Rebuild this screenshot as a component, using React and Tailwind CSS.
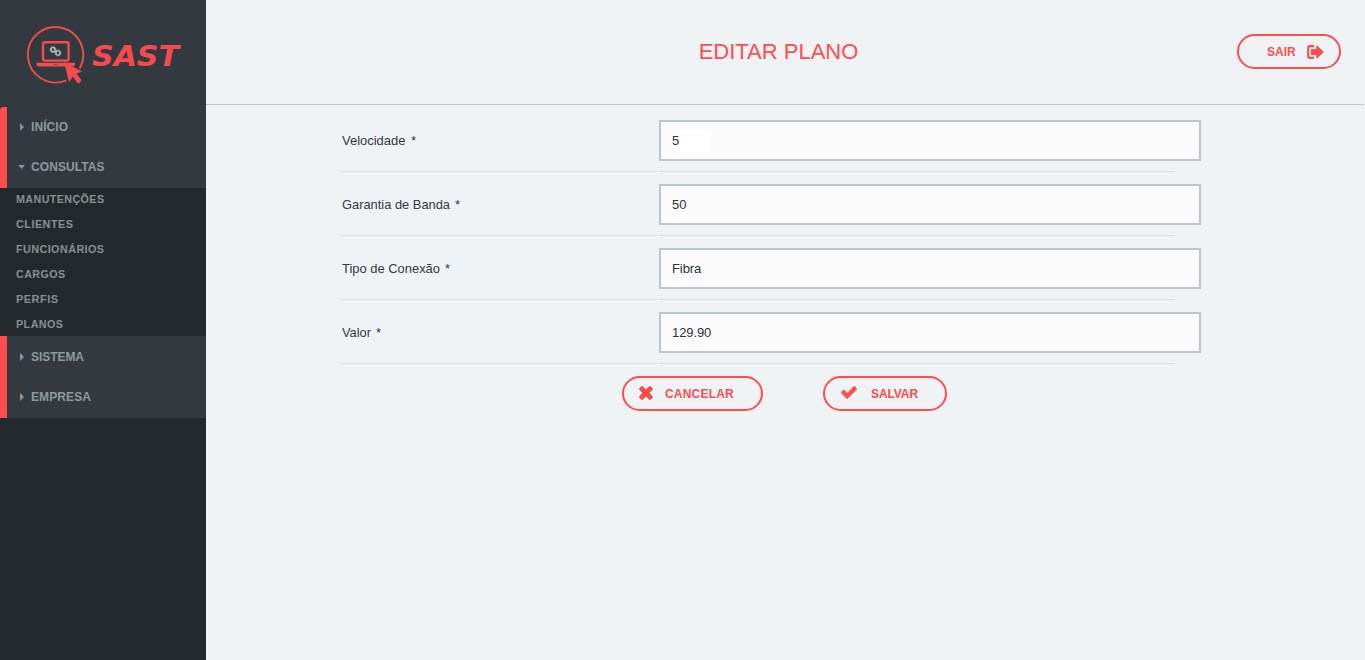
import React from "react";

function Logo() {
  return (
    <svg width="206" height="107" viewBox="0 0 206 107" className="block shrink-0" aria-label="SAST">
      <g fill="none" stroke="#f04d52">
        <path d="M66.3 80.3 A27.7 27.7 0 1 1 79.6 68.5" strokeWidth="1.9" />
        <rect x="43" y="42.2" width="25.6" height="18.4" rx="2" strokeWidth="2.4" />
      </g>
      <path d="M36.5 62.8H75v1.4q-.4 2.2-2.5 2.2H39q-2.3 0-2.5-2.2z" fill="#f04d52" />
      <path d="M53.5 64.4h4" stroke="#9b4146" strokeWidth="1" />
      <g fill="none" stroke="#b9c0c4">
        <circle cx="53" cy="49.6" r="2.1" strokeWidth="1.4" />
        <circle cx="53" cy="49.6" r="3" strokeWidth="0.9" strokeDasharray="1.2 1.15" />
        <circle cx="58" cy="53" r="2.1" strokeWidth="1.4" />
        <circle cx="58" cy="53" r="3" strokeWidth="0.9" strokeDasharray="1.2 1.15" />
      </g>
      <path d="M64 62 L82 71.4 L76.6 73.4 L81 79.4 Q81.2 82.8 78 83.4 L72.8 76.6 L69 82 Z" fill="#f54b50" />
      <text
        x="92"
        y="65.8"
        textLength="87"
        lengthAdjust="spacingAndGlyphs"
        fill="#f54b50"
        fontSize="28.5"
        fontWeight="bold"
        fontStyle="italic"
        fontFamily="'DejaVu Sans', sans-serif"
      >
        SAST
      </text>
    </svg>
  );
}

function Caret({ open }) {
  return (
    <span className="flex w-[7px] shrink-0 justify-center">
      {open ? (
        <svg width="7" height="4" viewBox="0 0 7 4"><path d="M0 0h7L3.5 4z" fill="#938f93" /></svg>
      ) : (
        <svg width="4" height="8" viewBox="0 0 4 8"><path d="M0 0v8l4-4z" fill="#938f93" /></svg>
      )}
    </span>
  );
}

function MenuItem({ open, width, children }) {
  return (
    <li className="flex h-10 items-center pl-[11px]">
      <Caret open={open} />
      <svg width="120" height="16" className="ml-[6px] block">
        <text x="0" y="12" textLength={width} fill="#8c9a9b" className="text-[12px] font-bold">{children}</text>
      </svg>
    </li>
  );
}

const links = [
  ["MANUTENÇÕES", 88.5],
  ["CLIENTES", 57.5],
  ["FUNCIONÁRIOS", 88.5],
  ["CARGOS", 49.5],
  ["PERFIS", 42.5],
  ["PLANOS", 47.5],
];

function Sidebar() {
  return (
    <aside className="flex w-[206px] shrink-0 flex-col bg-[#22292c]">
      <div className="bg-[#323a3f]"><Logo /></div>
      <ul className="h-[81px] rounded-tl-[3px] border-l-[7px] border-[#ff4d4d] bg-[#323a3f]">
        <MenuItem width={37}>INÍCIO</MenuItem>
        <MenuItem open width={73.5}>CONSULTAS</MenuItem>
      </ul>
      <ul className="h-[148px] pl-[15.5px]">
        {links.map(([name, width]) => (
          <li key={name} className="flex h-[25px] items-center">
            <svg width="160" height="16" className="block">
              <text x="0" y="10" textLength={width} lengthAdjust="spacingAndGlyphs" fill="#8b8f90" className="text-[10px] font-bold tracking-[0.4px]">{name}</text>
            </svg>
          </li>
        ))}
      </ul>
      <ul className="h-[82px] border-l-[7px] border-[#ff4d4d] bg-[#323a3f] pt-px">
        <MenuItem width={53}>SISTEMA</MenuItem>
        <MenuItem width={60}>EMPRESA</MenuItem>
      </ul>
    </aside>
  );
}

const button = "flex h-[35px] items-center rounded-full border-2 border-[#ff4d4d] text-[12px] font-bold text-[#ff4d4d]";

const fields = [
  ["Velocidade", "5", 63.5, 69],
  ["Garantia de Banda", "50", 108, 113],
  ["Tipo de Conexão", "Fibra", 98, 103],
  ["Valor", "129.90", 29, 34],
];

function Label({ text, width, star }) {
  return (
    <svg width="200" height="18" className="block text-[13px]" fill="#34393d">
      <text x="0" y="13" textLength={width} lengthAdjust="spacingAndGlyphs">{text}</text>
      <text x={star} y="13">*</text>
    </svg>
  );
}

export default function App() {
  return (
    <div className="flex h-[660px] w-[1365px] overflow-hidden bg-[#eff3f6] font-['Liberation_Sans',Arial,sans-serif]">
      <Sidebar />
      <div className="flex min-w-0 flex-1 flex-col">
        <header className="mr-px grid h-[105px] grid-cols-[1fr_auto_1fr] border-b border-[#bbc5cf]">
          <span />
          <h1 className="mr-[13px] pt-[35px] text-[22px] leading-[34px] text-[#ff4d4d]">EDITAR PLANO</h1>
          <div className="flex justify-end pr-[23px] pt-[34px]">
            <button className={`${button} w-[104px] pl-7`}>
              <span className="w-[40px] text-left">SAIR</span>
              <svg width="17" height="14" viewBox="0 0 17 14" className="block">
                <path d="M7 1.2H3.2Q1.2 1.2 1.2 3v8Q1.2 12.8 3.2 12.8H7" fill="none" stroke="#ff4d4d" strokeWidth="2.2" />
                <path d="M4 4h5.2V1.2Q9.3.1 10.3.8l6.2 5.6q.5.6 0 1.2l-6.2 5.6q-1 .7-1.1-.4V10H4z" fill="#ff4d4d" />
              </svg>
            </button>
          </div>
        </header>
        <main className="pl-[136px] pt-[15px]">
          {fields.map(([label, value, width, star], i) => (
            <div key={label} className="flex h-16 gap-[2px]">
              <div className="h-[52px] w-[315px] border-b border-[#d9dcdf] pt-[12px]">
                <Label text={label} width={width} star={star} />
              </div>
              <div className="h-[52px] w-[516px] border-b border-[#d9dcdf]">
                <div className="flex h-[41px] w-[542px] items-center border-2 border-[#bbc6cf] bg-[#fbfbfb] pl-[11px] text-[13px] tracking-[-0.1px] text-[#303236]">
                  <span>{value}</span>
                  {i === 0 && <span className="h-[22px] w-8 bg-white" />}
                </div>
              </div>
            </div>
          ))}
          <div className="flex gap-[60px] pl-[280px]">
            <button className={`${button} w-[141px] pl-[15px]`}>
              <svg width="14" height="14" viewBox="252 316 1288 1288" className="block -translate-y-px">
                <path fill="#ff4d4d" stroke="#ff4d4d" strokeWidth="90" d="M1490 1322q0 40-28 68l-136 136q-28 28-68 28t-68-28l-294-294-294 294q-28 28-68 28t-68-28l-136-136q-28-28-28-68t28-68l294-294-294-294q-28-28-28-68t28-68l136-136q28-28 68-28t68 28l294 294 294-294q28-28 68-28t68 28l136 136q28 28 28 68t-28 68l-294 294 294 294q28 28 28 68z" />
              </svg>
              <span className="ml-3 tracking-[0.2px]">CANCELAR</span>
            </button>
            <button className={`${button} w-[124px] pl-4`}>
              <svg width="16" height="13" viewBox="71 284 1650 1288" preserveAspectRatio="none" className="block -translate-y-px">
                <path fill="#ff4d4d" stroke="#ff4d4d" strokeWidth="90" d="M1671 566q0 40-28 68l-724 724-136 136q-28 28-68 28t-68-28l-136-136-362-362q-28-28-28-68t28-68l136-136q28-28 68-28t68 28l294 295 656-657q28-28 68-28t68 28l136 136q28 28 28 68z" />
              </svg>
              <span className="ml-[14px] tracking-[-0.1px]">SALVAR</span>
            </button>
          </div>
        </main>
      </div>
    </div>
  );
}
